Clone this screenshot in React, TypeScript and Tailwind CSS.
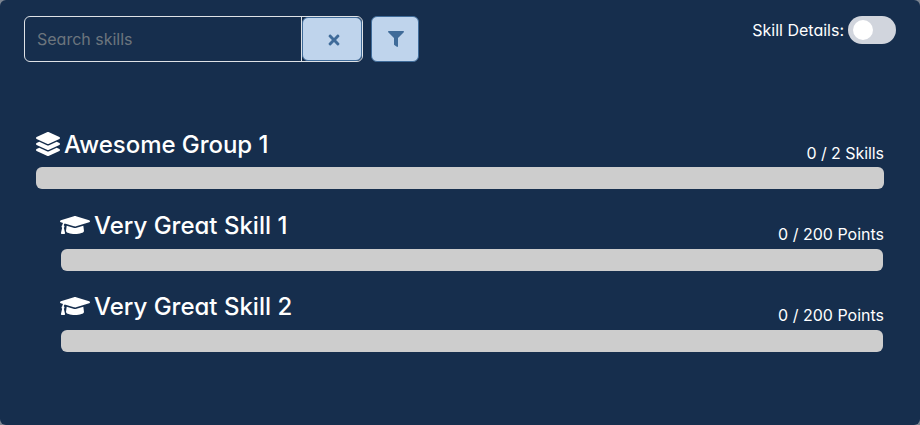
import { FaFilter, FaTimes, FaLayerGroup, FaGraduationCap } from "react-icons/fa";

function GroupRow({ title, status }: { title: string; status: string }) {
  return (
    <div className="flex h-[58px] flex-col">
      <div className="flex h-9 items-start justify-between">
        <div className="flex gap-1 text-2xl leading-7 font-medium tracking-[-0.05px]">
          <FaLayerGroup size={24} className="mt-px" />
          <span>{title}</span>
        </div>
        <span className="pt-[10px] text-base leading-6 tracking-[-0.06px]">{status}</span>
      </div>
      <div className="h-[22px] rounded-md bg-[#cdcdcd]" />
    </div>
  );
}

function SkillRow({ title, status }: { title: string; status: string }) {
  return (
    <div className="flex h-[58px] flex-col pl-6">
      <div className="flex h-[37px] shrink-0 items-start justify-between">
        <div className="flex gap-1 text-2xl leading-7 font-medium">
          <FaGraduationCap size={30} className="-mt-[2px]" />
          <span>{title}</span>
        </div>
        <span className="pt-[10px] text-base leading-6">{status}</span>
      </div>
      <div className="mx-px h-[22px] shrink-0 rounded-md bg-[#cdcdcd]" />
    </div>
  );
}

export default function App() {
  return (
    <div className="h-[425px] overflow-hidden bg-[#7c8591] font-['Inter',sans-serif] text-white [font-feature-settings:'cv11']">
      <div className="h-full rounded-md bg-[#162e4d]">
        <header className="flex items-start px-6 pt-4">
          <div className="flex h-[46px] w-[339px] overflow-hidden rounded-md border border-[#dee2e6]">
            <input className="w-[277px] border-r border-[#dee2e6] bg-transparent px-3 text-base outline-none placeholder:text-[#6c757d]" placeholder="Search skills" />
            <button className="flex flex-1 items-center justify-center rounded-md border border-[#3f6b99] bg-[#bfd4ec] pl-1 text-[#3f6b99]">
              <FaTimes size={16} className="mt-0.5" />
            </button>
          </div>
          <button className="ml-2 flex h-[46px] w-12 items-center justify-center rounded-md border border-[#3f6b99] bg-[#bfd4ec] pl-px text-[#3f6b99]">
            <FaFilter size={16} />
          </button>
          <div className="ml-auto flex items-center gap-1">
            <span className="text-base">Skill Details:</span>
            <div className="flex h-7 w-12 items-center rounded-full bg-[#d1d5dd] px-[5px]">
              <div className="size-5 rounded-full bg-white" />
            </div>
          </div>
        </header>
        <main className="mt-[69px] flex flex-col gap-[23px] px-9">
          <GroupRow title="Awesome Group 1" status="0 / 2 Skills" />
          <SkillRow title="Very Great Skill 1" status="0 / 200 Points" />
          <SkillRow title="Very Great Skill 2" status="0 / 200 Points" />
        </main>
      </div>
    </div>
  );
}
